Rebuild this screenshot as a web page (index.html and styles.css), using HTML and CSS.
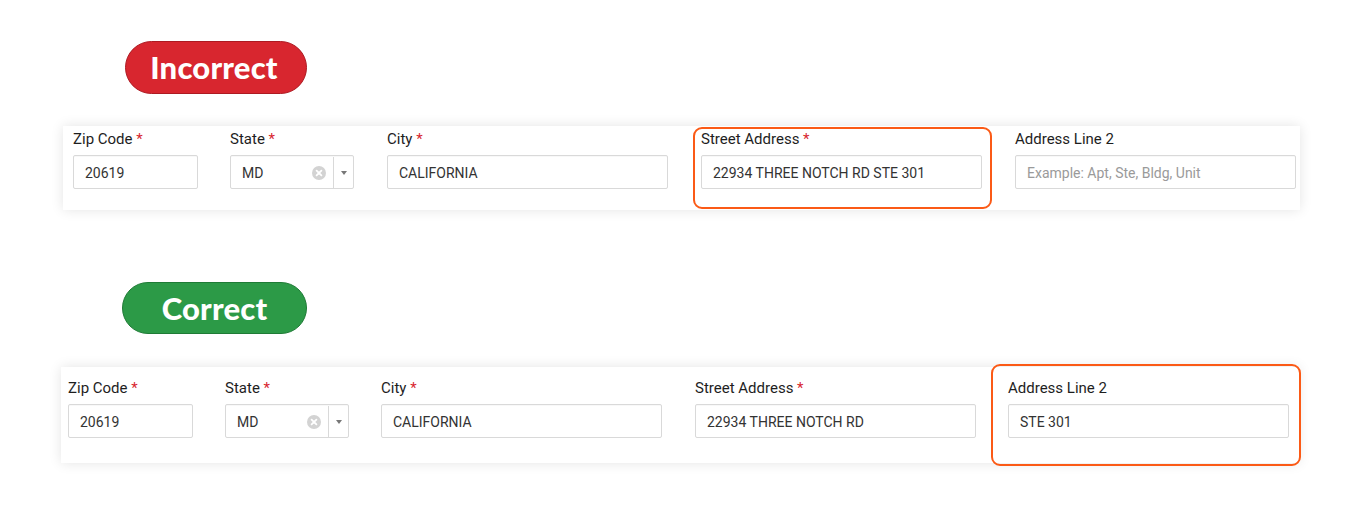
FILE: index.html
```html
<!DOCTYPE html>
<html>
<head>
<meta charset="utf-8">
<link rel="stylesheet" href="styles.css">
</head>
<body>
<div class="page">
  <section class="example example--bad">
    <div class="badge badge--bad">Incorrect</div>
    <div class="panel panel--bad">
      <div class="field field--zip">
        <label class="label">Zip Code <span class="req">*</span></label>
        <div class="input">20619</div>
      </div>
      <div class="field field--state">
        <label class="label">State <span class="req">*</span></label>
        <div class="select">
          <span class="select-value">MD</span>
          <svg class="clear" width="14" height="14" viewBox="0 0 14 14"><circle cx="7" cy="7" r="7" fill="#d3d3d3"/><path d="M4.6 4.6 9.4 9.4M9.4 4.6 4.6 9.4" stroke="#fff" stroke-width="1.8" stroke-linecap="round"/></svg>
          <span class="select-arrow"><svg width="6" height="4" viewBox="0 0 6 4"><path d="M0 0h6L3 4z" fill="#777"/></svg></span>
        </div>
      </div>
      <div class="field field--wide">
        <label class="label">City <span class="req">*</span></label>
        <div class="input">CALIFORNIA</div>
      </div>
      <div class="field field--wide highlight highlight--street">
        <label class="label">Street Address <span class="req">*</span></label>
        <div class="input">22934 THREE NOTCH RD STE 301</div>
      </div>
      <div class="field field--wide">
        <label class="label">Address Line 2</label>
        <div class="input input--placeholder">Example: Apt, Ste, Bldg, Unit</div>
      </div>
    </div>
  </section>

  <section class="example example--good">
    <div class="badge badge--good">Correct</div>
    <div class="panel panel--good">
      <div class="field field--zip">
        <label class="label">Zip Code <span class="req">*</span></label>
        <div class="input">20619</div>
      </div>
      <div class="field field--state field--tight">
        <label class="label">State <span class="req">*</span></label>
        <div class="select">
          <span class="select-value">MD</span>
          <svg class="clear" width="14" height="14" viewBox="0 0 14 14"><circle cx="7" cy="7" r="7" fill="#d3d3d3"/><path d="M4.6 4.6 9.4 9.4M9.4 4.6 4.6 9.4" stroke="#fff" stroke-width="1.8" stroke-linecap="round"/></svg>
          <span class="select-arrow"><svg width="6" height="4" viewBox="0 0 6 4"><path d="M0 0h6L3 4z" fill="#777"/></svg></span>
        </div>
      </div>
      <div class="field field--wide">
        <label class="label">City <span class="req">*</span></label>
        <div class="input">CALIFORNIA</div>
      </div>
      <div class="field field--wide">
        <label class="label">Street Address <span class="req">*</span></label>
        <div class="input">22934 THREE NOTCH RD</div>
      </div>
      <div class="field field--wide field--pull highlight highlight--line2">
        <label class="label">Address Line 2</label>
        <div class="input">STE 301</div>
      </div>
    </div>
  </section>
</div>
</body>
</html>
```

FILE: styles.css
```css
* { box-sizing: border-box; }
html, body { margin: 0; padding: 0; background: #fff; }
body { font-family: Roboto, "Liberation Sans", Arial, sans-serif; color: #222; }
.page { width: 1360px; height: 505px; overflow: hidden; }

.example--bad { padding-top: 41px; }
.example--good { padding-top: 72px; }

.badge {
  display: flex;
  align-items: center;
  justify-content: center;
  border-radius: 30px;
  color: #fff;
  font-family: Lato, "Open Sans", sans-serif;
  font-weight: 900;
  font-size: 31px;
  letter-spacing: 0.2px;
}
.badge--bad {
  margin-left: 125px;
  width: 182px;
  height: 53px;
  background: #d8262f;
  border: 1.5px solid #ad1a22;
  padding-bottom: 2px;
  padding-right: 4px;
}
.badge--good {
  margin-left: 122px;
  width: 185px;
  height: 52px;
  background: #2c9a47;
  border: 1.5px solid #1f7b36;
  padding-bottom: 1px;
}

.panel {
  display: flex;
  align-items: flex-start;
  gap: 33px;
  background: #fff;
  box-shadow: 0 0 12px rgba(0, 0, 0, 0.11);
}
.panel--bad {
  margin-top: 32px;
  margin-left: 63px;
  width: 1237px;
  height: 84px;
  padding: 4px 4px 0 10px;
}
.panel--good {
  margin-top: 33px;
  margin-left: 61px;
  width: 1238px;
  height: 96px;
  padding: 12px 9px 0 7px;
}

.field { display: flex; flex-direction: column; position: relative; }
.field--zip { width: 125px; margin-right: -1px; }
.field--state { width: 124px; }
.field--tight { margin-right: -1px; }
.field--pull { margin-left: -1px; }
.field--wide { width: 281px; }

.label {
  font-size: 15px;
  line-height: 18px;
  color: #1e1e1e;
  margin-bottom: 7px;
}
.req { color: #d8262f; }

.input, .select {
  height: 34px;
  border: 1px solid #d9d9d9;
  border-radius: 2px;
  background: #fff;
  font-size: 14px;
  color: #333;
  display: flex;
  align-items: center;
  padding: 1px 11px 0;
  box-shadow: inset 0 1px 1px rgba(0,0,0,0.03);
}
.input--placeholder { color: #9a9a9a; }

.select { padding: 1px 0 0 11px; }
.select-value { flex: 1; }
.clear { margin-right: 7px; }
.select-arrow {
  width: 20px;
  height: 100%;
  border-left: 1px solid #d9d9d9;
  display: flex;
  align-items: center;
  justify-content: center;
}

.highlight::after {
  content: "";
  position: absolute;
  border: 2px solid #fb5a16;
  border-radius: 9px;
  pointer-events: none;
}
.highlight--street::after { left: -8px; right: -10px; top: -3px; bottom: -20px; }
.highlight--line2::after { left: -17px; right: -12px; top: -15px; bottom: -28px; }
```
